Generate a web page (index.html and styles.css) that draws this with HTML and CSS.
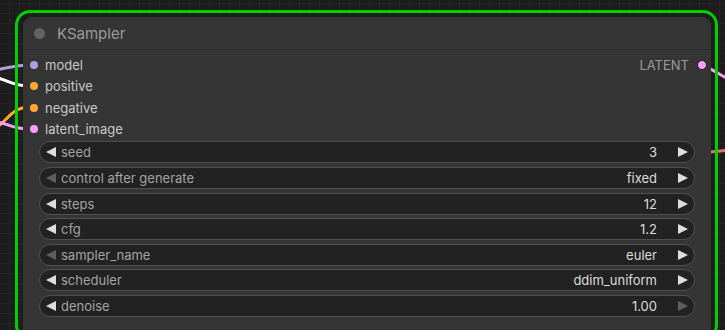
FILE: index.html
```html
<!DOCTYPE html>
<html lang="en">
<head>
  <meta charset="UTF-8">
  <title>KSampler</title>
  <link rel="stylesheet" href="styles.css">
</head>
<body>

<div class="canvas">
  <svg class="wires" width="725" height="330" viewBox="0 0 725 330">
    <path d="M-10 70 C 5 70, 10 65, 30 65" stroke="#b39ddb" />
    <path d="M-10 77 C 5 77, 10 86, 30 86" stroke="#ffffff" />
    <path d="M-4 128 C 8 120, 12 107, 30 107" stroke="#ffa931" />
    <path d="M-10 121 C 5 121, 10 129, 30 129" stroke="#ff9cf9" />
    <path d="M700 65 C 712 68, 718 74, 730 80" stroke="#ff9cf9" />
    <path d="M700 153 C 710 152, 718 151, 730 150" stroke="#e2706c" />
  </svg>

  <div class="selected">
    <div class="node">
      <div class="node-title">
        <span class="title-dot"></span>
        <span class="title-text">KSampler</span>
      </div>

      <div class="slots">
        <div class="slot-row">
          <div class="slot"><span class="dot" style="background:#b39ddb"></span>model</div>
          <div class="slot out">LATENT<span class="dot ring" style="background:#ff9cf9"></span></div>
        </div>
        <div class="slot-row">
          <div class="slot"><span class="dot" style="background:#ffa931"></span>positive</div>
        </div>
        <div class="slot-row">
          <div class="slot"><span class="dot" style="background:#ffa931"></span>negative</div>
        </div>
        <div class="slot-row">
          <div class="slot"><span class="dot" style="background:#ff9cf9"></span>latent_image</div>
        </div>
      </div>

      <div class="widgets">
        <div class="widget">
          <svg class="arrow" viewBox="0 0 10 10"><polygon points="10,0 10,10 0,5" /></svg>
          <span class="w-label">seed</span>
          <span class="w-value">3</span>
          <svg class="arrow" viewBox="0 0 10 10"><polygon points="0,0 0,10 10,5" /></svg>
        </div>
        <div class="widget">
          <svg class="arrow off" viewBox="0 0 10 10"><polygon points="10,0 10,10 0,5" /></svg>
          <span class="w-label">control after generate</span>
          <span class="w-value">fixed</span>
          <svg class="arrow" viewBox="0 0 10 10"><polygon points="0,0 0,10 10,5" /></svg>
        </div>
        <div class="widget">
          <svg class="arrow" viewBox="0 0 10 10"><polygon points="10,0 10,10 0,5" /></svg>
          <span class="w-label">steps</span>
          <span class="w-value">12</span>
          <svg class="arrow" viewBox="0 0 10 10"><polygon points="0,0 0,10 10,5" /></svg>
        </div>
        <div class="widget">
          <svg class="arrow" viewBox="0 0 10 10"><polygon points="10,0 10,10 0,5" /></svg>
          <span class="w-label">cfg</span>
          <span class="w-value">1.2</span>
          <svg class="arrow" viewBox="0 0 10 10"><polygon points="0,0 0,10 10,5" /></svg>
        </div>
        <div class="widget">
          <svg class="arrow off" viewBox="0 0 10 10"><polygon points="10,0 10,10 0,5" /></svg>
          <span class="w-label">sampler_name</span>
          <span class="w-value">euler</span>
          <svg class="arrow" viewBox="0 0 10 10"><polygon points="0,0 0,10 10,5" /></svg>
        </div>
        <div class="widget">
          <svg class="arrow" viewBox="0 0 10 10"><polygon points="10,0 10,10 0,5" /></svg>
          <span class="w-label">scheduler</span>
          <span class="w-value">ddim_uniform</span>
          <svg class="arrow" viewBox="0 0 10 10"><polygon points="0,0 0,10 10,5" /></svg>
        </div>
        <div class="widget">
          <svg class="arrow" viewBox="0 0 10 10"><polygon points="10,0 10,10 0,5" /></svg>
          <span class="w-label">denoise</span>
          <span class="w-value">1.00</span>
          <svg class="arrow off" viewBox="0 0 10 10"><polygon points="0,0 0,10 10,5" /></svg>
        </div>
      </div>
    </div>
  </div>
</div>

</body>
</html>
```

FILE: styles.css
```css
* {
  box-sizing: border-box;
  margin: 0;
  padding: 0;
}

html, body {
  overflow: hidden;
}

body {
  width: 725px;
  height: 330px;
  font-family: 'Inter', 'Liberation Sans', sans-serif;
  background-color: #1c1c1c;
  background-image:
    linear-gradient(to right, #252525 1px, transparent 1px),
    linear-gradient(to bottom, #252525 1px, transparent 1px);
  background-size: 10px 10px;
  background-position: 9px 3px;
}

.canvas {
  position: relative;
  width: 725px;
  height: 330px;
  overflow: hidden;
  padding: 10px 0 0 15px;
}

.wires {
  position: absolute;
  left: 0;
  top: 0;
}

.wires path {
  fill: none;
  stroke-width: 3;
}

/* green selection outline around the node */
.selected {
  position: relative;
  width: 703px;
  height: 330px;
  border: 3px solid #00d000;
  border-radius: 15px;
  padding: 4px 4px 0 5px;
}

.node {
  height: 100%;
  background: #353535;
  border-radius: 9px 9px 0 0;
}

.node-title {
  height: 33px;
  display: flex;
  align-items: center;
  padding-left: 11px;
  padding-top: 1px;
  gap: 12px;
  border-bottom: 1px solid #2a2a2a;
}

.title-dot {
  width: 11px;
  height: 11px;
  border-radius: 50%;
  background: #636363;
}

.title-text {
  color: #9b9b9b;
  font-size: 15px;
  padding-bottom: 1px;
}

.slots {
  padding-top: 4.5px;
}

.slot-row {
  height: 21.3px;
  display: flex;
  justify-content: space-between;
  align-items: center;
}

.slot {
  display: flex;
  align-items: center;
  gap: 7px;
  padding-left: 7px;
  font-size: 13px;
  color: #c8c8c8;
}

.slot.out {
  padding-left: 0;
  padding-right: 4px;
  gap: 8px;
  color: #9b9b9b;
}

.dot {
  width: 8px;
  height: 8px;
  border-radius: 50%;
}

.dot.ring {
  width: 10px;
  height: 10px;
  border: 1px solid #1a1a1a;
}

.widgets {
  display: flex;
  flex-direction: column;
  gap: 3.67px;
  padding: 1.5px 16px 0 16px;
}

.widget {
  height: 22px;
  display: flex;
  align-items: center;
  background: #222222;
  border: 1px solid #505050;
  border-radius: 11px;
  padding: 0 6px 0 6px;
  font-size: 13px;
}

.arrow {
  width: 10px;
  height: 10px;
  fill: #dddddd;
  flex: none;
}

.arrow.off {
  fill: #5e5e5e;
}

.w-label {
  color: #a3a3a3;
  margin-left: 5px;
  flex: 1;
}

.w-value {
  color: #dddddd;
  margin-right: 21px;
}
```
